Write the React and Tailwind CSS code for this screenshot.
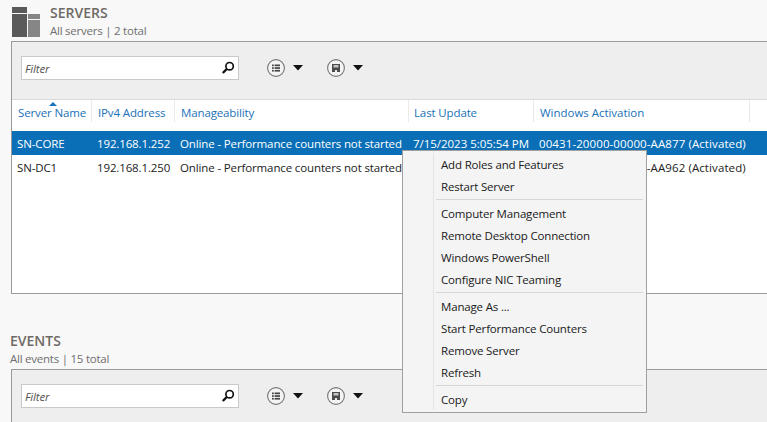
const FONT = "font-['Open_Sans',sans-serif]";

function ListIcon() {
  return (
    <svg width="18" height="18" viewBox="0 0 18 18" className="shrink-0">
      <circle cx="9" cy="9" r="8.4" fill="#f4f4f4" stroke="#777" strokeWidth="1.1" />
      <g fill="#444">
        <rect x="5" y="5.5" width="1.7" height="1.7" />
        <rect x="5" y="8.2" width="1.7" height="1.7" />
        <rect x="5" y="10.9" width="1.7" height="1.7" />
        <rect x="7.6" y="5.5" width="5.4" height="1.7" />
        <rect x="7.6" y="8.2" width="5.4" height="1.7" />
        <rect x="7.6" y="10.9" width="5.4" height="1.7" />
      </g>
    </svg>
  );
}

function SaveIcon() {
  return (
    <svg width="18" height="18" viewBox="0 0 18 18" className="shrink-0">
      <circle cx="9" cy="9" r="8.4" fill="#f4f4f4" stroke="#777" strokeWidth="1.1" />
      <path d="M5 5h8v8H5z" fill="#4a4a4a" />
      <rect x="6.5" y="6" width="5" height="2.5" fill="#c4c4c4" />
      <rect x="8" y="11" width="2" height="2" fill="#eee" />
    </svg>
  );
}

function Caret() {
  return (
    <svg width="10" height="6" viewBox="0 0 10 6" className="shrink-0">
      <path d="M0 0h10L5 5.5z" fill="#111" />
    </svg>
  );
}

function Toolbar({ height }) {
  return (
    <div className={`flex items-start bg-[#eeeeee] pt-[14px] pl-[9px] ${height}`}>
      <div className="flex h-[24px] w-[218px] items-center justify-between border border-[#c9c9c9] bg-white pl-[3px] pr-[3px]">
        <span className="pt-[2px] text-[11.5px] italic tracking-[-0.15px] text-[#555]">Filter</span>
        <svg width="14" height="14" viewBox="0 0 14 14">
          <circle cx="8.6" cy="5.2" r="3.7" fill="none" stroke="#111" strokeWidth="1.7" />
          <path d="M5.8 8 1.8 12" stroke="#111" strokeWidth="2.4" />
        </svg>
      </div>
      <div className="ml-[28px] flex h-[24px] items-center gap-[8px]">
        <ListIcon />
        <Caret />
      </div>
      <div className="ml-[24px] flex h-[24px] items-center gap-[8px]">
        <SaveIcon />
        <Caret />
      </div>
    </div>
  );
}

const columns = [
  { label: "Server Name", w: "w-[80px]", pad: "pl-[6px]", track: "tracking-[-0.13px]" },
  { label: "IPv4 Address", w: "w-[83px]", pad: "pl-[6px]", track: "tracking-[-0.13px]" },
  { label: "Manageability", w: "w-[234px]", pad: "pl-[6px]", track: "tracking-[-0.13px]" },
  { label: "Last Update", w: "w-[125px]", pad: "pl-[5px]", track: "tracking-[-0.13px]" },
  { label: "Windows Activation", w: "w-[216px]", pad: "pl-[6px]", track: "tracking-[-0.03px]" },
];

function Row({ cells, selected }) {
  return (
    <div className={`flex h-[24px] items-center whitespace-nowrap pt-[1px] text-[11.5px] tracking-[-0.13px] ${selected ? "bg-[#0a6fb7] text-white" : "bg-white text-[#222]"}`}>
      <span className="w-[80px] pl-[5px]">{cells[0]}</span>
      <span className="w-[83px] pl-[5px]">{cells[1]}</span>
      <span className="w-[234px] pl-[5px]">{cells[2]}</span>
      <span className="w-[125px] pl-[4px] tracking-[-0.03px]">{cells[3]}</span>
      <span className="w-[216px] pl-[5px] tracking-[0.1px]">{cells[4]}</span>
    </div>
  );
}

function MenuItem({ children }) {
  return (
    <div className="flex h-[22px] items-center pl-[38px] pt-[1px] text-[11.5px] tracking-[-0.17px] text-[#1a1a1a]">{children}</div>
  );
}

function Sep() {
  return (
    <div className="flex h-[5px] items-center pl-[33px] pr-[3px]">
      <div className="h-px w-full bg-[#d7d7d7]" />
    </div>
  );
}

function ContextMenu() {
  return (
    <div className="absolute left-[402px] top-[150px] z-10 h-[263px] w-[245px] border border-[#a0a0a0] bg-[#f4f4f4] py-[2px]">
      <div className="absolute bottom-[2px] left-[30px] top-[2px] w-px bg-[#e3e3e3]" />
      <MenuItem>Add Roles and Features</MenuItem>
      <MenuItem>Restart Server</MenuItem>
      <Sep />
      <MenuItem>Computer Management</MenuItem>
      <MenuItem>Remote Desktop Connection</MenuItem>
      <MenuItem>Windows PowerShell</MenuItem>
      <MenuItem>Configure NIC Teaming</MenuItem>
      <Sep />
      <MenuItem>Manage As ...</MenuItem>
      <MenuItem>Start Performance Counters</MenuItem>
      <MenuItem>Remove Server</MenuItem>
      <MenuItem>Refresh</MenuItem>
      <Sep />
      <MenuItem>Copy</MenuItem>
    </div>
  );
}

function ServersIcon() {
  return (
    <svg width="28" height="30" viewBox="0 0 28 30" className="shrink-0">
      <rect x="0" y="0" width="15" height="6" fill="#5a5a5a" />
      <rect x="0" y="7" width="15" height="23" fill="#5a5a5a" />
      <rect x="16" y="7" width="12" height="5" fill="#868686" />
      <rect x="16" y="13" width="12" height="17" fill="#868686" />
    </svg>
  );
}

export default function App() {
  return (
    <div className={`relative h-[422px] w-[767px] overflow-hidden bg-[#f8f8f8] ${FONT}`}>
      <div className="flex h-[41px] items-start pl-[12px] pt-[7px]">
        <ServersIcon />
        <div className="ml-[10px] -mt-[4px]">
          <div className="text-[14px] font-semibold leading-[19px] text-[#6e6a66]">SERVERS</div>
          <div className="text-[11.5px] leading-[17px] tracking-[-0.24px] text-[#6f6f6f]">All servers | 2 total</div>
        </div>
      </div>

      <div className="ml-[11px] border-y border-l border-[#9a9a9a]">
        <Toolbar height="h-[57px]" />
        <div className="h-[194px] border-t border-[#d9d9d9] bg-white">
          <div className="flex h-[31px] whitespace-nowrap text-[11.5px] text-[#1a72b8]">
            {columns.map((c, i) => (
              <div key={c.label} className={`relative h-[22px] border-r border-[#eaeaea] pt-[4px] ${c.w} ${c.pad} ${c.track}`}>
                {i === 0 && (
                  <svg width="8" height="4" viewBox="0 0 8 4" className="absolute left-[37px] top-[2px]">
                    <path d="M0 4 4 0l4 4z" fill="#1a72b8" />
                  </svg>
                )}
                {c.label}
              </div>
            ))}
          </div>
          <Row
            selected
            cells={["SN-CORE", "192.168.1.252", "Online - Performance counters not started", "7/15/2023 5:05:54 PM", "00431-20000-00000-AA877 (Activated)"]}
          />
          <Row
            cells={["SN-DC1", "192.168.1.250", "Online - Performance counters not started", "7/15/2023 5:05:54 PM", "00431-20000-00000-AA962 (Activated)"]}
          />
        </div>
      </div>

      <div className="h-[75px] pl-[10px] pt-[37px]">
        <div className="text-[14px] font-semibold leading-[19px] text-[#6e6a66]">EVENTS</div>
        <div className="text-[11.5px] leading-[17px] tracking-[-0.24px] text-[#6f6f6f]">All events | 15 total</div>
      </div>

      <div className="ml-[11px] border-t border-l border-[#9a9a9a]">
        <Toolbar height="h-[57px]" />
      </div>

      <ContextMenu />
    </div>
  );
}
